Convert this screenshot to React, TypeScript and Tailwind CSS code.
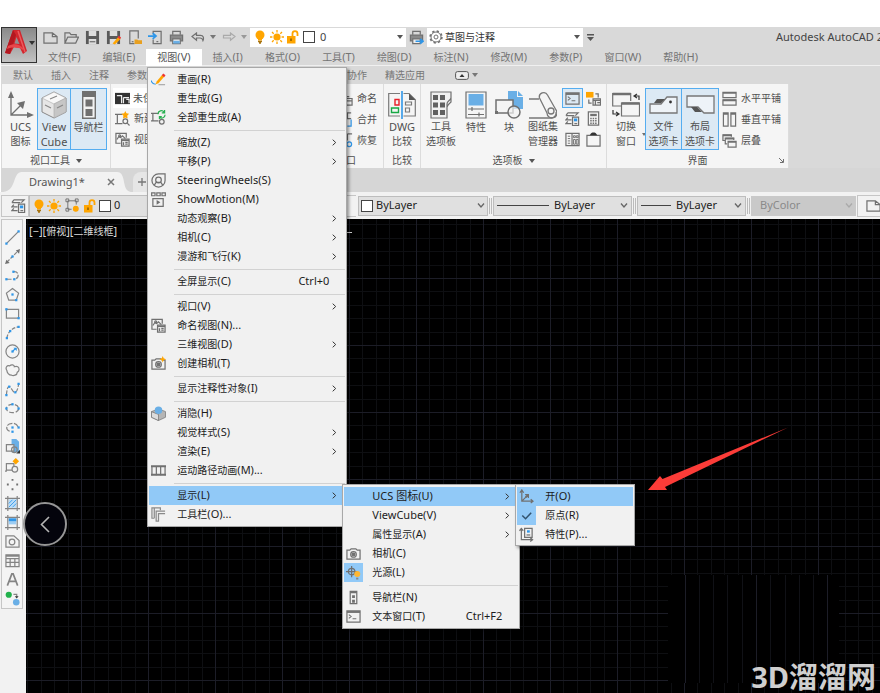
import React from 'react';

const GRAY = '#707070';
const BLUE = '#2f96e8';
const SKY = '#6aafe6';
const ORANGE = '#ffa500';

type IconProps = { w?: number; h?: number; box?: string; stroke?: string; children: React.ReactNode };

const Icon = ({ w = 15, h = 15, box = '0 0 16 16', stroke = GRAY, children }: IconProps) => (
  <svg width={w} height={h} viewBox={box} fill="none" stroke={stroke} strokeWidth="1.3" className="shrink-0" aria-hidden="true">
    {children}
  </svg>
);

const Caret = ({ color = '#555' }: { color?: string }) => (
  <svg width="6" height="4" viewBox="0 0 6 4" className="shrink-0" aria-hidden="true"><path d="M0 0h6L3 4z" fill={color} /></svg>
);

const Chevron = ({ color = '#666' }: { color?: string }) => (
  <svg width="8" height="5" viewBox="0 0 8 5" className="pointer-events-none shrink-0" aria-hidden="true"><path d="M1 .5l3 3.5L7 .5" fill="none" stroke={color} strokeWidth="1.3" /></svg>
);

// ---------- shared glyphs ----------

const Bulb = () => (
  <Icon w={12} h={14} box="0 0 12 14">
    <circle cx="6" cy="5" r="4.5" fill={ORANGE} stroke="none" />
    <path d="M4 8h4v2.5H4z" fill={ORANGE} stroke="none" />
    <path d="M4 11.5h4M5 13h2" stroke="#a87410" />
  </Icon>
);

const Sun = () => (
  <Icon w={14} h={14} box="0 0 14 14">
    <circle cx="7" cy="7" r="3.6" fill={ORANGE} stroke="none" />
    <path d="M7 0v2.4M7 11.6V14M0 7h2.4M11.6 7H14M2 2l1.7 1.7M10.3 10.3L12 12M12 2l-1.7 1.7M3.7 10.3L2 12" stroke={ORANGE} />
  </Icon>
);

const Lock = () => (
  <Icon w={13} h={14} box="0 0 13 14">
    <path d="M6.5 6V3.6a2.5 2.5 0 015 0V6" stroke={ORANGE} strokeWidth="1.8" />
    <path d="M1 6h8.5v7.5H1z" fill={ORANGE} stroke="none" />
    <path d="M5 8.5v2.5" stroke="#7a5200" />
  </Icon>
);

const Printer = ({ arrow = false }: { arrow?: boolean }) => (
  <Icon>
    <path d="M4 5V1.5h8V5" />
    <path d="M1.5 5.5h13v6h-13z" fill="#8a8a8a" />
    <path d="M4 9.5h8v5H4z" fill="#eee" />
    {arrow ? <path d="M7 12h8M12 9.5l3 2.5-3 2.5" stroke={BLUE} strokeWidth="1.8" /> : <path d="M4.5 11.5h7v3h-7z" fill={SKY} stroke="none" />}
  </Icon>
);

const UcsIcon = () => (
  <Icon>
    <path d="M3 1.5V13h12M1 4l2-3 2 3M12.500 11l2.500 2-2.500 2M3 13l7-7M6.500 6H10v3.500" />
    <path d="M7 9l3-3" strokeWidth="2" />
  </Icon>
);

const CameraIcon = ({ spark = false }: { spark?: boolean }) => (
  <Icon>
    <path d="M1 4.500h3l1.500-1.500h5L12 4.500h3V14H1z" />
    <circle cx="8" cy="9" r="3" />
    <circle cx="8" cy="9" r="1.500" fill={GRAY} />
    {spark && <path d="M12.500 0l1 2.500 2.500 1-2.500 1-1 2.500-1-2.500-2.500-1 2.500-1z" fill={ORANGE} stroke="none" />}
  </Icon>
);

const NamedViewIcon = () => (
  <Icon>
    <path d="M6 12H1V1.500h11V6" />
    <path d="M2 8l2-3 2 1 2-2 3 3" />
    <circle cx="5" cy="4" r="1" />
    <path d="M7 7.500h8V15H7z" fill="#e8e8e8" />
    <path d="M7 9h8M9 11v3M11 11h2.500M11 13h2.500" />
  </Icon>
);

const NavBarIcon = () => (
  <Icon>
    <path d="M4.500 1.500h7v13h-7z" />
    <path d="M4.500 1h7v2.500h-7zM6.500 5.500h3v3h-3zM6.500 10.500h3v3h-3z" fill={GRAY} stroke="none" />
  </Icon>
);

const TerminalIcon = () => (
  <Icon>
    <path d="M1 2h14v12H1z" />
    <path d="M1 3.200h14" strokeWidth="2" />
    <path d="M3 6l2.500 2L3 10M7 10.500h4" strokeWidth="1.100" />
  </Icon>
);

const BlockIcon = ({ w = 15, h = 15 }: { w?: number; h?: number }) => (
  <svg width={w} height={h} viewBox="0 0 28 28" fill="none" stroke={GRAY} strokeWidth="1.500" className="shrink-0" aria-hidden="true">
    <path d="M13 0h9v6h6v12H13z" fill={SKY} stroke="none" />
    <path d="M23 0l5 5h-5z" fill={SKY} stroke="none" />
    <path d="M1 9h17v13H1z" fill="#f4f4f4" />
    <circle cx="19" cy="21" r="6" fill="#f4f4f4" fillOpacity=".7" />
    <path d="M0 20h3v3H0z" fill={GRAY} stroke="none" />
  </svg>
);

// ---------- view menu ----------

type MenuItem = {
  label: string;
  mnemonic: string;
  suffix?: string;
  icon?: React.ReactNode;
  shortcut?: string;
  arrow?: boolean;
  latin?: boolean;
  active?: boolean;
  checked?: boolean;
  children?: MenuEntry[];
};
type MenuEntry = MenuItem | 'separator';

const ucsMenu: MenuEntry[] = [
  { label: '开', mnemonic: 'O', icon: <UcsIcon />, active: true },
  {
    label: '原点', mnemonic: 'R', checked: true,
    icon: <Icon><path d="M3.500 8l3.500 3.500L13 5" stroke="#33536e" strokeWidth="1.600" /></Icon>,
  },
  {
    label: '特性', mnemonic: 'P', suffix: '...',
    icon: (
      <Icon>
        <path d="M2.500 2v11.500H14M.5 4l2-2.500 2 2.500M12 11.500l2.500 2-2.500 2" />
        <path d="M6 1.500h8V11H6z" />
        <path d="M8.500 3.500h3v2.500h-3z" fill={BLUE} stroke="none" />
        <path d="M8 8.500h4" />
      </Icon>
    ),
  },
];

const displayMenu: MenuEntry[] = [
  { label: 'UCS 图标', mnemonic: 'U', arrow: true, active: true, latin: true, children: ucsMenu },
  { label: 'ViewCube', mnemonic: 'V', arrow: true, latin: true },
  { label: '属性显示', mnemonic: 'A', arrow: true },
  { label: '相机', mnemonic: 'C', icon: <CameraIcon /> },
  {
    label: '光源', mnemonic: 'L', checked: true,
    icon: (
      <Icon>
        <circle cx="6" cy="7" r="3.500" />
        <path d="M6 1v12M0 7h12" />
        <circle cx="12" cy="9.500" r="3.200" fill="#ffb733" stroke="none" />
        <path d="M10.800 13.500h2.400v2h-2.400z" fill="#888" stroke="none" />
      </Icon>
    ),
  },
  'separator',
  { label: '导航栏', mnemonic: 'N', icon: <NavBarIcon /> },
  { label: '文本窗口', mnemonic: 'T', icon: <TerminalIcon />, shortcut: 'Ctrl+F2' },
];

const viewMenu: MenuEntry[] = [
  {
    label: '重画', mnemonic: 'R',
    icon: (
      <Icon>
        <path d="M0 9c1 3 3 4 5 4" stroke={BLUE} />
        <path d="M5 13l1-3 6-7 2 2-6 7z" fill={ORANGE} stroke="none" />
        <path d="M11.500 3.500L13 1.500l2.500 2L14 5.500z" fill="#e33" stroke="none" />
        <path d="M8 13.500h7" stroke="#aaa" />
      </Icon>
    ),
  },
  { label: '重生成', mnemonic: 'G' },
  {
    label: '全部重生成', mnemonic: 'A',
    icon: (
      <Icon>
        <path d="M8 3.500H2v8h6M0 3.500h3M0 11.500h3" />
        <circle cx="11.500" cy="12.500" r="2.500" />
        <path d="M7.500 4.500A3.500 3.500 0 0114 2.500M14.500 0v3h-3M15 5a3.500 3.500 0 01-6 2.500M9 9.500V7h2.500" stroke="#27b050" />
      </Icon>
    ),
  },
  'separator',
  { label: '缩放', mnemonic: 'Z', arrow: true },
  { label: '平移', mnemonic: 'P', arrow: true },
  {
    label: 'SteeringWheels', mnemonic: 'S', latin: true,
    icon: (
      <Icon>
        <path d="M8 1h7v7a7 7 0 11-7-7z" />
        <circle cx="8" cy="7.500" r="3" />
        <path d="M3.500 13l2-3h5l2 3" />
      </Icon>
    ),
  },
  {
    label: 'ShowMotion', mnemonic: 'M', latin: true,
    icon: (
      <Icon>
        <path d="M.7 1h3.600v3H.7zM6.200 1h3.600v3H6.200zM11.700 1h3.600v3h-3.600zM2 7h11v8.300H2z" />
        <path d="M6 8.500v5l4-2.500z" fill={GRAY} stroke="none" />
      </Icon>
    ),
  },
  { label: '动态观察', mnemonic: 'B', arrow: true },
  { label: '相机', mnemonic: 'C', arrow: true },
  { label: '漫游和飞行', mnemonic: 'K', arrow: true },
  'separator',
  { label: '全屏显示', mnemonic: 'C', shortcut: 'Ctrl+0' },
  'separator',
  { label: '视口', mnemonic: 'V', arrow: true },
  { label: '命名视图', mnemonic: 'N', suffix: '...', icon: <NamedViewIcon /> },
  { label: '三维视图', mnemonic: 'D', arrow: true },
  { label: '创建相机', mnemonic: 'T', icon: <CameraIcon spark /> },
  'separator',
  { label: '显示注释性对象', mnemonic: 'I', arrow: true },
  'separator',
  {
    label: '消隐', mnemonic: 'H',
    icon: (
      <Icon>
        <path d="M0.500 6L8 3l7.500 3v6L8 15.500.5 12z" fill="#b5b5b5" stroke="#777" strokeWidth=".8" />
        <path d="M.5 6L8 9v6.500L.5 12z" fill="#dcdcdc" stroke="#777" strokeWidth=".8" />
        <circle cx="8" cy="4.500" r="4" fill={SKY} stroke="none" />
      </Icon>
    ),
  },
  { label: '视觉样式', mnemonic: 'S', arrow: true },
  { label: '渲染', mnemonic: 'E', arrow: true },
  {
    label: '运动路径动画', mnemonic: 'M', suffix: '...',
    icon: (
      <Icon>
        <path d="M0 3.500h16M0 12.500h16" strokeWidth="2" />
        <path d="M1 4v9M5.700 4v9M10.300 4v9M15 4v9" />
      </Icon>
    ),
  },
  'separator',
  { label: '显示', mnemonic: 'L', arrow: true, active: true, children: displayMenu },
  {
    label: '工具栏', mnemonic: 'O', suffix: '...',
    icon: (
      <Icon stroke="#8a8a8a">
        <path d="M10 3.500V1H1v11h2.500M3.500 1v11" />
        <path d="M15 4.500H5.500V15H8V7h7" />
      </Icon>
    ),
  },
];

const Menu = ({ items, className }: { items: MenuEntry[]; className: string }) => (
  <ul role="menu" className={`absolute border border-[#a8a8a8] bg-[#f1f1f1] px-px text-[#1c1c1c] shadow-[2px_2px_3px_rgba(0,0,0,0.4)] ${className}`}>
    {items.map((item, i) =>
      item === 'separator' ? (
        <li key={i} role="separator" className="flex h-[6px] items-center pl-[25px]"><span className="h-px w-full bg-[#d2d2d2]" /></li>
      ) : (
        <li key={i} role="none" className="relative">
          <button role="menuitem" className={`flex h-[19px] w-full items-center whitespace-nowrap text-[10px] ${item.active ? 'bg-[#91c9f7]' : ''}`}>
            <span className={`mr-[9px] flex h-full w-[19px] shrink-0 items-center justify-center ${item.checked ? 'bg-[#91c9f7]' : ''}`}>{item.icon}</span>
            <span className={item.latin ? 'text-[11px]' : ''}>
              {item.label}<span className="text-[11px]">({item.mnemonic}){item.suffix}</span>
            </span>
            <span className="flex-1" />
            {item.shortcut && <span className="mr-[16px] text-[11px]">{item.shortcut}</span>}
            {item.arrow && (
              <svg width="5" height="7" viewBox="0 0 5 7" className="mr-[8px]" aria-hidden="true"><path d="M.7.7l3 2.800-3 2.800" fill="none" stroke="#333" /></svg>
            )}
          </button>
          {item.children && (
            <Menu items={item.children} className={item.children === displayMenu ? 'left-[193px] -top-[2px] w-[178px] pt-[2px] pb-[2px]' : 'left-[171px] -top-[3px] w-[120px] pt-[2px] pb-px'} />
          )}
        </li>
      )
    )}
  </ul>
);

// ---------- title bar ----------

const quickAccess = [
  { name: '新建', icon: <Icon><path d="M1 3h9l5 4v7H1zM10 3v4h5" /></Icon> },
  { name: '打开', icon: <Icon><path d="M1 14V3h5l1.500 2H13v2.500M1 14L4 7.500h11.500L12.500 14z" /></Icon> },
  {
    name: '保存',
    icon: <Icon><path d="M1 1h14v14H1z" fill="#5a5a5a" stroke="none" /><path d="M4 1h8v5.500H4zM4 9.500h8V15H4z" fill="#ddd" stroke="none" /><path d="M5 12.500h6" /></Icon>,
  },
  {
    name: '另存为',
    icon: <Icon><path d="M1 1h14v14H1z" fill="#5a5a5a" stroke="none" /><path d="M4 1h8v5.500H4zM4 9.500h8V15H4z" fill="#ddd" stroke="none" /><path d="M7 14.500l6-7 2.500 2-6 6z" fill={ORANGE} stroke="none" /><path d="M13 7l2.500 2" stroke="#e33" strokeWidth="2" /></Icon>,
  },
  {
    name: '从移动设备打开',
    icon: <Icon><path d="M8 14.500H3V1h9v8" /><path d="M5 12.500h2" /><path d="M8 15V10h3l1 1h4v4z" fill="#e8a020" stroke="none" /></Icon>,
  },
  {
    name: '保存到移动设备',
    icon: <Icon><path d="M5.500 4V1.500H14v13H5.500V10M9 12.500h2" /><path d="M0 6.500h7M5 3.500l3.500 3L5 9.500" stroke={BLUE} strokeWidth="1.900" /></Icon>,
  },
  { name: '打印', icon: <Printer /> },
];

const Arrow = ({ flip = false }: { flip?: boolean }) => (
  <svg width="14" height="10" viewBox="0 0 14 10" fill="none" stroke={flip ? '#aaa' : '#707070'} strokeWidth="1.200" aria-hidden="true">
    {flip ? <path d="M13 4.500L8.500 1v2.300H1.500v2.700h7v2.300z" /> : <path d="M1 4.500L5.500 1v2.300h4c3 0 3.500 3 2.500 5.200-.5-2-1.500-2.500-3-2.500H5.500v2.300z" />}
  </svg>
);

const TitleBar = () => (
  <div className="flex h-[20px] items-center">
    <div className="ml-[6px] flex items-center gap-[6px]">
      {quickAccess.map((q) => <button key={q.name} aria-label={q.name}>{q.icon}</button>)}
    </div>
    <button aria-label="放弃" className="ml-[7px]"><Arrow /></button>
    <button aria-label="放弃列表" className="ml-[5px]"><Caret color="#777" /></button>
    <button aria-label="重做" className="ml-[6px]"><Arrow flip /></button>
    <button aria-label="重做列表" className="ml-[5px]"><Caret color="#999" /></button>
    <div className="ml-[3px] flex h-[19px] w-[156px] shrink-0 items-center bg-white pr-[3px] pl-[4px] text-[11px] text-[#444]">
      <Bulb />
      <span className="ml-[4px]"><Sun /></span>
      <span className="ml-[2px]"><Lock /></span>
      <span className="mr-[5px] ml-[4px] size-[12px] shrink-0 border border-[#444]" />
      <select aria-label="图层" className="min-w-0 flex-1 appearance-none bg-transparent"><option>0</option></select>
      <Caret />
    </div>
    <button aria-label="批处理打印" className="ml-[3px]"><Printer arrow /></button>
    <div className="ml-[3px] flex h-[19px] w-[156px] shrink-0 items-center bg-white pr-[3px] pl-[2px] text-[10px] text-[#333]">
      <svg width="14" height="14" viewBox="0 0 14 14" fill="none" stroke={GRAY} className="mr-[2px] shrink-0" aria-hidden="true">
        <circle cx="7" cy="7" r="5" />
        <circle cx="7" cy="7" r="2" />
        <circle cx="7" cy="7" r="5.900" strokeWidth="1.600" strokeDasharray="2.300 2.330" />
      </svg>
      <select aria-label="工作空间" className="min-w-0 flex-1 appearance-none bg-transparent"><option>草图与注释</option></select>
      <Caret />
    </div>
    <button aria-label="自定义快速访问工具栏" className="ml-[4px] shrink-0">
      <svg width="7" height="7" viewBox="0 0 7 7" aria-hidden="true"><path d="M0 0h7v1.500H0zM0 3h7L3.500 7z" fill="#555" /></svg>
    </button>
    <span className="ml-[182px] text-[11px] whitespace-nowrap text-[#444]">Autodesk AutoCAD 2020</span>
  </div>
);

const menuBar = [
  ['文件', 'F'], ['编辑', 'E'], ['视图', 'V'], ['插入', 'I'], ['格式', 'O'], ['工具', 'T'],
  ['绘图', 'D'], ['标注', 'N'], ['修改', 'M'], ['参数', 'P'], ['窗口', 'W'], ['帮助', 'H'],
];

const Header = () => (
  <header className="relative z-20 ml-px flex h-[39px] border-b border-[#f0f0f0] bg-[#d9d9d9]">
    <button aria-label="应用程序菜单" className="flex h-[36px] w-[36px] shrink-0 items-start justify-center gap-px border border-[#333] bg-linear-to-b from-[#8a8a8a] to-[#c2c2c2] pt-px">
      <svg width="24" height="26" viewBox="0 0 24 26" aria-hidden="true">
        <path d="M9 1h7l7 21-4 3-3-6-6-1-4 7-5-1z" fill="#d2262d" />
        <path d="M9 1l3 5-6 19-5-1z" fill="#b31820" />
        <path d="M12.500 8l3 7-5-.5z" fill="#909090" />
        <path d="M4 17c6-3 11-2 15 2v2c-5-3-10-3-16-1z" fill="#e8474b" />
        <path d="M14 2l7 21" stroke="#ea5a5e" strokeWidth="1.500" />
      </svg>
      <span className="mt-[12px]"><Caret color="#333" /></span>
    </button>
    <div className="min-w-0 flex-1">
      <TitleBar />
      <nav className="mt-[2px] flex h-[17px] text-[10px] text-[#747474]">
        {menuBar.map(([label, key]) => (
          <div key={key} className="relative">
            <button className={`flex h-full items-center px-[11px] whitespace-nowrap ${key === 'V' ? 'bg-white text-[#555]' : ''}`}>
              {label}<span className="text-[11px]">({key})</span>
            </button>
            {key === 'V' && <Menu items={viewMenu} className="top-[18px] left-px w-[200px] pt-[2px] pb-[2px]" />}
          </div>
        ))}
      </nav>
    </div>
  </header>
);

// ---------- ribbon ----------

const tabs = ['默认', '插入', '注释', '参数化', '视图', '管理', '输出', '附加模块', '协作', '精选应用'];

const RibbonTabs = () => (
  <div className="flex h-[18px] items-center pl-[3px] text-[10px] text-[#777]">
    {tabs.map((t) => <button key={t} className="px-[9px] whitespace-nowrap">{t}</button>)}
    <button aria-label="最小化功能区" className="ml-[21px] flex items-center gap-[3px]">
      <svg width="14" height="9" viewBox="0 0 14 9" aria-hidden="true"><rect x=".6" y=".6" width="12.800" height="7.800" rx="2" fill="#eee" stroke="#555" /><path d="M4.500 6L7 3l2.500 3z" fill="#333" /></svg>
      <Caret color="#777" />
    </button>
  </div>
);

const BigButton = ({ icon, lines, on = false, className = '' }: { icon: React.ReactNode; lines: string[]; on?: boolean; className?: string }) => (
  <button className={`flex h-[62px] shrink-0 flex-col items-center border pt-px ${on ? 'border-[#55adf0] bg-[#dce9f4]' : 'border-transparent'} ${className}`}>
    <span className="flex h-[30px] items-center">{icon}</span>
    {lines.map((l) => (
      <span key={l} className={`leading-[15px] whitespace-nowrap ${/^[A-Z]/.test(l) ? 'text-[11px]' : 'text-[10px]'}`}>{l}</span>
    ))}
  </button>
);

const Panel = ({ title, caret = false, launcher = false, className = '', children }: { title?: string; caret?: boolean; launcher?: boolean; className?: string; children: React.ReactNode }) => (
  <section className={`flex shrink-0 flex-col border-r border-[#dcdcdc] text-[10px] text-[#505050] ${className}`}>
    <div className="flex h-[69px] pt-[4px]">{children}</div>
    <div className="relative flex h-[15px] items-center justify-center gap-[6px]">
      {title}{caret && <Caret />}
      {launcher && (
        <button aria-label={`${title}设置`} className="absolute right-[4px]">
          <svg width="5" height="5" viewBox="0 0 5 5" aria-hidden="true"><path d="M0 0l4 4M4.500 1v3.500H1" stroke={GRAY} fill="none" /></svg>
        </button>
      )}
    </div>
  </section>
);

const SmallButton = ({ icon, label }: { icon: React.ReactNode; label: string }) => (
  <button className="flex h-[21px] items-center gap-[4px] whitespace-nowrap">{icon}{label}</button>
);

const tilings = [
  { label: '水平平铺', icon: <Icon><path d="M1 1.500h14V7H1zM1 9.500h14V15H1z" /><path d="M1 2h14M1 10h14" strokeWidth="2" /></Icon> },
  { label: '垂直平铺', icon: <Icon><path d="M1.500 1h5v14h-5zM9.500 1h5v14h-5z" /><path d="M1.500 2h5M9.500 2h5" strokeWidth="2" /></Icon> },
  { label: '层叠', icon: <Icon><path d="M3 8H1V2h9v2M5.500 11.500h-2v-6h9v2" /><path d="M6.500 9H15v6H6.500z" /><path d="M1 2.500h9M4 6h9M6.500 9.500H15" strokeWidth="1.800" /></Icon> },
];

const CubeIcon = () => (
  <svg width="26" height="28" viewBox="0 0 26 28" aria-hidden="true">
    <path d="M13 1l12 6v14l-12 6L1 21V7z" fill="#e6e6e6" stroke="#888" />
    <path d="M13 1l12 6-12 6L1 7z" fill="#f8f8f8" stroke="#aaa" strokeWidth=".6" />
    <path d="M13 13l12-6v14l-12 6z" fill="#c6c6c6" stroke="#aaa" strokeWidth=".6" />
    <path d="M9 8l7-3M4 14l6 3M16 17l6-3" stroke="#888" strokeWidth="1.200" />
  </svg>
);

const SheetIcon = () => (
  <Icon>
    <path d="M3 2h11l-3 3M1 5h9M3 2L1 5M3 7L1 9.500h6M3 11l-2 2.500h6" />
    <path d="M8 6.500h6.500v9H8z" fill="#eee" />
    <path d="M9.500 8h3.500v3H9.500z" fill={BLUE} stroke="none" />
    <path d="M10 13.500h3" />
  </Icon>
);

const paletteTools = [
  { name: '命令行', icon: <TerminalIcon />, on: true },
  {
    name: '设计中心',
    icon: <Icon><path d="M0 1h8v6H0z" fill={ORANGE} stroke="none" /><path d="M10 3h3v4M3 9v4h3" /><path d="M7.500 8.500h8v6.500h-8z" fill="#eee" /><path d="M7.500 10h8M10 10v5M12 12.500h3" /></Icon>,
  },
  { name: '图纸集', icon: <SheetIcon /> },
  {
    name: '计算器',
    icon: <Icon><path d="M2.500 1h11v14h-11z" /><path d="M4.500 3h7v2.500h-7z" fill={GRAY} stroke="none" /><path d="M4.500 8h7M4.500 10.500h7M4.500 13h7" strokeWidth="1.600" strokeDasharray="1.600 1" /></Icon>,
  },
  {
    name: '标记集',
    icon: <Icon><path d="M1 1.500h14v13H1zM7.500 1.500v13" /><path d="M3 4.500h2.500M3 7h2.500M3 9.500h2.500M3 12h2.500M9 4h2v2H9zM12 4h2v2h-2zM9 8h2v5H9zM12 8h2v5h-2z" strokeWidth="1" /></Icon>,
  },
  {
    name: '快速计算',
    icon: <Icon><path d="M1 3.500h14V15H1z" /><path d="M4 3.500C5 1 6.500.5 8 .5s3 .5 4 3z" fill="#333" stroke="none" /></Icon>,
  },
];

const Ribbon = () => (
  <div className="ml-px flex h-[84px] w-max bg-[#f5f5f5]">
    <Panel title="视口工具" caret className="w-[109px]">
      <BigButton
        className="ml-[2px] w-[33px]"
        lines={['UCS', '图标']}
        icon={
          <svg width="27" height="27" viewBox="0 0 27 27" fill="none" stroke={GRAY} strokeWidth="1.300" aria-hidden="true">
            <path d="M4 4v20h19M4 24L16 12" />
            <path d="M1 7l3-7 3 7zM20 21l7 3-7 3zM10 12l8-2-2 8z" fill={GRAY} stroke="none" />
          </svg>
        }
      />
      <BigButton on className="w-[34px]" lines={['View', 'Cube']} icon={<CubeIcon />} />
      <BigButton
        on
        className="-ml-px w-[37px]"
        lines={['导航栏']}
        icon={
          <svg width="14" height="28" viewBox="0 0 14 28" fill="none" stroke={GRAY} aria-hidden="true">
            <path d="M.7.7h12.600v26.600H.7z" strokeWidth="1.400" fill="#f2f2f2" />
            <path d="M0 0h14v6H0z" fill={GRAY} stroke="none" />
            <path d="M3.500 8.500h7v7h-7zM3.500 18h7v7h-7z" fill={GRAY} stroke="none" />
          </svg>
        }
      />
    </Panel>
    <Panel className="w-[178px]">
      <div className="ml-[2px]">
        <div className="flex h-[20px] w-[160px] items-center gap-[3px] bg-white pl-[2px]">
          <Icon><path d="M0 2h16v12H0z" fill="#333" stroke="none" /><path d="M2 5h5v8M9 7h6M9 7v6M12 9h3v4" stroke="#eee" /></Icon>
          <select aria-label="当前视图" className="min-w-0 flex-1 appearance-none bg-transparent"><option>未保存的视图</option></select>
        </div>
        <div className="pl-[2px]">
          <SmallButton label="新建视图" icon={<Icon><path d="M8 3.500H2.500v10H8M0 3.500h4M0 13.500h4" /><path d="M11 0l1.200 2.300 2.800.7-2 2 .5 3-2.500-1.200L8.500 8 9 5 7 3l2.800-.7z" fill={ORANGE} stroke="none" /><circle cx="11" cy="11" r="2.500" /><path d="M13 13l2.500 2.500" /></Icon>} />
          <SmallButton label="视图管理器" icon={<NamedViewIcon />} />
        </div>
      </div>
    </Panel>
    <Panel title="模型视口" className="w-[95px]">
      <div className="ml-auto pr-[6px]">
        <SmallButton label="命名" icon={<Icon><path d="M4 1v5h8M9 8h6v7H9zM9 10.500h6" /></Icon>} />
        <SmallButton label="合并" icon={<Icon><path d="M14 1h-4v6h4" /><path d="M10 15h4V8" stroke={BLUE} /></Icon>} />
        <SmallButton label="恢复" icon={<Icon><path d="M10 1h5M10 1v7" /><circle cx="12" cy="12" r="2.500" stroke={BLUE} /></Icon>} />
      </div>
    </Panel>
    <Panel title="比较" className="w-[37px]">
      <BigButton
        className="w-[36px]"
        lines={['DWG', '比较']}
        icon={
          <svg width="28" height="28" viewBox="0 0 28 28" fill="none" stroke="#7a7a7a" strokeWidth="1.200" aria-hidden="true">
            <path d="M12 2.500H.7V25H12M15.500 2.500H21l6.300 6.300V25H15.500" />
            <path d="M21 2.500V9h6.500z" fill="#555" stroke="none" />
            <path d="M14 0v28" stroke={BLUE} strokeWidth="1.600" />
            <path d="M7 8.500h4v5.500H7z" stroke="#e8202a" strokeWidth="1.400" />
            <path d="M3.500 17h7v4.500h-7z" stroke="#18a845" strokeWidth="1.400" />
            <path d="M17.500 11h6v3h-6zM17.500 17h4v4h-4z" />
          </svg>
        }
      />
    </Panel>
    <Panel title="选项板" caret className="w-[186px]">
      <BigButton
        className="ml-[2px] w-[36px]"
        lines={['工具', '选项板']}
        icon={
          <svg width="22" height="28" viewBox="0 0 22 28" fill="none" stroke={GRAY} strokeWidth="1.200" aria-hidden="true">
            <path d="M17 17v10H1V1h20v6" fill="#f0f0f0" />
            <path d="M3 4h5v5H3zM10 4h5v5h-5zM3 11.500h5v5H3zM10 11.500h5v5h-5zM3 19h5v5H3zM10 19h5v5h-5z" fill="#606060" stroke="none" />
            <path d="M21 7c-1 3-4 3-4 6v4M21 7v4c-1 1-3 2-4 5" />
          </svg>
        }
      />
      <BigButton
        className="w-[34px]"
        lines={['特性']}
        icon={
          <svg width="22" height="28" viewBox="0 0 22 28" fill="none" stroke={GRAY} strokeWidth="1.200" aria-hidden="true">
            <path d="M1 1h20v26H1z" />
            <path d="M3.500 3h15v11.500h-15z" fill={SKY} stroke="none" />
            <path d="M3 18h16M3 23.500h16M7 16v4M14 21.500v4" />
          </svg>
        }
      />
      <BigButton className="w-[32px]" lines={['块']} icon={<BlockIcon w={28} h={28} />} />
      <BigButton
        className="w-[36px]"
        lines={['图纸集', '管理器']}
        icon={
          <svg width="28" height="28" viewBox="0 0 28 28" fill="none" stroke="#777" strokeWidth="1.300" aria-hidden="true">
            <path d="M0 8h10M0 27h22M10.500 7L18 22M18.500 4L27 19" />
            <path d="M10.500 7a4.300 4.300 0 018-3M18 22a5 5 0 109-3" />
            <path d="M22 27a5 5 0 005-6" />
            <circle cx="22" cy="20" r="3" />
          </svg>
        }
      />
      <div className="ml-px grid h-[62px] grid-cols-[21px_21px]">
        {paletteTools.map((t) => (
          <button key={t.name} aria-label={t.name} className={`flex h-[20px] items-center justify-center border ${t.on ? 'border-[#55adf0] bg-[#dce9f4]' : 'border-transparent'}`}>{t.icon}</button>
        ))}
      </div>
    </Panel>
    <Panel title="界面" launcher className="w-[182px]">
      <div className="flex items-start">
        <BigButton
          className="ml-[3px] w-[32px]"
          lines={['切换', '窗口']}
          icon={
            <svg width="28" height="26" viewBox="0 0 28 26" fill="none" stroke={GRAY} strokeWidth="1.200" aria-hidden="true">
              <path d="M9 14H.7V1.500h18V9" />
              <path d="M9.500 11h18v13h-18z" fill="#f5f5f5" />
              <path d="M.7 2h18M9.500 11.500h18" strokeWidth="2.400" />
              <path d="M22 4h5v4M25 2l-3 2 3 2M1 18v4h5M4 20l3 2-3 2" stroke="#333" />
            </svg>
          }
        />
        <svg width="4" height="3" viewBox="0 0 4 3" className="mt-[45px]" aria-hidden="true"><path d="M0 0h4L2 3z" fill={GRAY} /></svg>
      </div>
      <BigButton
        on
        className="-ml-px w-[37px]"
        lines={['文件', '选项卡']}
        icon={
          <svg width="29" height="20" viewBox="0 0 29 20" fill="none" stroke="#777" strokeWidth="1.300" aria-hidden="true">
            <path d="M1 9h11l6-7h10v16H1z" fill="#eef3f8" />
            <path d="M5 8l3-4h8l-4 4z" fill="#555" stroke="none" />
            <circle cx="21.500" cy="7" r="1.400" fill="#333" stroke="none" />
          </svg>
        }
      />
      <BigButton
        on
        className="-ml-px w-[38px]"
        lines={['布局', '选项卡']}
        icon={
          <svg width="29" height="20" viewBox="0 0 29 20" fill="none" stroke="#777" strokeWidth="1.300" aria-hidden="true">
            <path d="M1 1h27v17H18l-6-6H1z" fill="#eef3f8" />
            <path d="M5 12h6l5 5h-7z" fill="#555" stroke="none" />
          </svg>
        }
      />
      <div className="ml-[3px] flex flex-col">
        {tilings.map((t) => <SmallButton key={t.label} {...t} />)}
      </div>
    </Panel>
  </div>
);

// ---------- file tabs + property bars ----------

const FileTabs = () => (
  <div className="ml-px flex h-[24px] items-end bg-[#d6d6d6]">
    <svg width="21" height="20" viewBox="0 0 21 20" aria-hidden="true"><path d="M2 20C16 19 11 0 21 0v20z" fill="#f2f2f2" /></svg>
    <div className="-ml-px flex h-[20px] w-[96px] items-center justify-between bg-[#f2f2f2] pr-[2px] pl-[8px] text-[11px] text-[#555]">
      <button>Drawing1*</button>
      <button aria-label="关闭">
        <svg width="8" height="8" viewBox="0 0 8 8" aria-hidden="true"><path d="M1 1l6 6M7 1L1 7" stroke="#777" strokeWidth="1.500" /></svg>
      </button>
    </div>
    <svg width="16" height="20" viewBox="0 0 16 20" aria-hidden="true"><path d="M14 20C4 19 10 0 0 0v20z" fill="#f2f2f2" /></svg>
    <button aria-label="新图形" className="flex h-[20px] w-[22px] items-center rounded-t-lg bg-[#e6e6e6] pl-[5px]">
      <svg width="8" height="8" viewBox="0 0 8 8" aria-hidden="true"><path d="M4 0v8M0 4h8" stroke="#777" strokeWidth="1.300" /></svg>
    </button>
  </div>
);

const Divider = () => <span className="mx-px h-[16px] w-[3px] shrink-0 border-x border-[#bbb]" />;

const PropertyBar = () => (
  <div className="flex h-[27px] items-center bg-[#f2f2f2] pl-px text-[11px] text-[#222]">
    <button aria-label="图层特性" className="flex h-[22px] w-[28px] shrink-0 items-center justify-center border border-[#c6c6c6] pl-[7px]"><SheetIcon /></button>
    <div className="flex h-[22px] w-[310px] shrink-0 items-center border border-[#bdbdbd] bg-[#e0e0e0] pl-[3px]">
      <Bulb />
      <span className="ml-[2px]"><Sun /></span>
      <span className="ml-[4px]">
        <Icon><path d="M3 3h9M3 3v9M12 3v4M3 12h4M1 1h3v3H1zM11 1h3v3h-3zM1 11h3v3H1z" strokeWidth="1" /><circle cx="11.500" cy="11.500" r="2.500" fill={ORANGE} stroke={ORANGE} /></Icon>
      </span>
      <span className="ml-[3px]"><Lock /></span>
      <span className="mx-[3px] size-[12px] shrink-0 border border-[#444] bg-white" />
      <select aria-label="当前图层" className="min-w-0 flex-1 appearance-none bg-transparent"><option>0</option></select>
    </div>
    <span className="ml-[3px] h-[22px] w-[14px] shrink-0 border-y border-[#c6c6c6]" />
    <div className="ml-[2px] flex h-[20px] w-[130px] shrink-0 items-center border border-[#bdbdbd] bg-[#e0e0e0] px-[2px]">
      <span className="mr-[3px] size-[12px] border border-[#444] bg-white" />
      <select aria-label="颜色" className="min-w-0 flex-1 appearance-none bg-transparent"><option>ByLayer</option></select>
      <Chevron />
    </div>
    <Divider />
    <div className="flex h-[20px] w-[139px] shrink-0 items-center border border-[#bdbdbd] bg-[#e0e0e0] px-[3px]">
      <span className="mr-[5px] h-px w-[52px] shrink-0 bg-[#444]" />
      <select aria-label="线型" className="min-w-0 flex-1 appearance-none bg-transparent"><option>ByLayer</option></select>
      <Chevron />
    </div>
    <Divider />
    <div className="flex h-[20px] w-[109px] shrink-0 items-center border border-[#bdbdbd] bg-[#e0e0e0] px-[3px]">
      <span className="mr-[5px] h-px w-[30px] shrink-0 bg-[#444]" />
      <select aria-label="线宽" className="min-w-0 flex-1 appearance-none bg-transparent"><option>ByLayer</option></select>
      <Chevron />
    </div>
    <Divider />
    <div className="flex h-[20px] w-[105px] shrink-0 items-center bg-[#c9c9c9] pr-[3px] pl-[9px] text-[#8a8a8a]">
      <select aria-label="打印样式" disabled className="min-w-0 flex-1 appearance-none bg-transparent"><option>ByColor</option></select>
      <Chevron color="#aaa" />
    </div>
    <button aria-label="新建" className="ml-px flex h-[22px] flex-1 items-center border border-[#c6c6c6] pl-[8px]"><Icon><path d="M1 3h9l5 4v7H1zM10 3v4h5" /></Icon></button>
  </div>
);

// ---------- draw toolbar ----------

const Dot = ({ x, y }: { x: number; y: number }) => <rect x={x - 1.2} y={y - 1.2} width="2.400" height="2.400" fill={BLUE} stroke="none" />;

const drawTools = [
  { name: '直线', icon: <><path d="M2 14L14 2" /><Dot x={1.5} y={14.5} /><Dot x={14.5} y={1.5} /></> },
  { name: '构造线', icon: <><path d="M2 14L14 2" strokeDasharray="4 1.500" /><path d="M0 16l1.500-4.500L5 15zM16 0l-4.500 1.500L15 5z" fill={GRAY} stroke="none" /><Dot x={8} y={8} /></> },
  { name: '多段线', icon: <><path d="M2 12h8M9 4c6-1 7 7 1 8" strokeDasharray="5 1.500" /><Dot x={1.5} y={12} /><Dot x={9} y={4} /><Dot x={10} y={12} /></> },
  { name: '多边形', icon: <><path d="M8 1.500l6.500 5L12 14H4L1.500 6.500z" /><Dot x={8} y={8} /><Dot x={12} y={14} /></> },
  { name: '矩形', icon: <><path d="M1.500 3.500h13v9.500h-13z" /><Dot x={1.5} y={3.5} /><Dot x={14.5} y={13} /></> },
  { name: '圆弧', icon: <><path d="M2 14C3 7 8 3 14 2" strokeDasharray="4 1.500" /><Dot x={2} y={14} /><Dot x={5.5} y={6.5} /><Dot x={14.5} y={2} /></> },
  { name: '圆', icon: <><circle cx="8" cy="8" r="7" /><path d="M8 8l3-3" stroke={BLUE} /><Dot x={8} y={8} /><path d="M9 4h3.500v3.500z" fill={BLUE} stroke="none" /></> },
  { name: '修订云线', icon: <path d="M2 8C0 5 2 2 5 3c2-2 5-1 5 1 3-1 5 0 5 3 0 2-2 3-2 3 0 3-4 4-6 3-3 0-5-3-5-5z" /> },
  { name: '样条曲线', icon: <><path d="M1.500 14C2 8 3 4 5 5s3 6 5.500 6S14 6 14.500 2" strokeDasharray="5 1.500" /><Dot x={1.5} y={14} /><Dot x={4.5} y={5} /><Dot x={11} y={11} /><Dot x={14.5} y={2} /></> },
  { name: '椭圆', icon: <><ellipse cx="8" cy="8" rx="6.500" ry="4.500" strokeDasharray="5 2" /><Dot x={1.5} y={8} /><Dot x={14.5} y={8} /><Dot x={8} y={3.5} /></> },
  { name: '椭圆弧', icon: <><path d="M5 12C0 10 1 3.500 8 3.500c3 0 5 1.500 6 4" strokeDasharray="6 1.500" /><Dot x={8} y={8} /><Dot x={14.5} y={8} /><Dot x={8} y={12.5} /></> },
  { name: '插入块', icon: <><path d="M7 0h5l3 3v11H7z" fill={SKY} stroke="none" /><path d="M1.500 6h8v7h-8z" fill="#f2f2f2" /><circle cx="10" cy="11.500" r="3" /><path d="M12 15.500h4v-4z" fill="#333" stroke="none" /></> },
  { name: '创建块', icon: <><path d="M1.500 6h8v7h-8zM0 14h2" /><circle cx="10.500" cy="12" r="3" fill="#f2f2f2" /><path d="M11.500 0l3.500 3.500L11.500 7 8 3.500z" fill={ORANGE} stroke="none" /></> },
  { name: '点', icon: <path d="M7 2h2v2H7zM2 7h2v2H2zM12 7h2v2h-2zM7 12h2v2H7z" fill={GRAY} stroke="none" /> },
  { name: '图案填充', icon: <><path d="M3 0v16M13 0v16M0 2.500h16M0 13.500h16" /><path d="M4 3.500h8v9H4z" fill="#b9dcf7" stroke="none" /><path d="M4 8l4-4M4 12l8-8M8 12l4-4" stroke={BLUE} strokeWidth=".9" /></> },
  { name: '渐变色', icon: <><path d="M3 0v16M13 0v16M0 2.500h16M0 13.500h16" /><path d="M4 3.500h8V7H4z" fill={BLUE} stroke="none" /><path d="M4 7h8v3H4z" fill="#9ccdf4" stroke="none" /></> },
  { name: '面域', icon: <><path d="M1 2h8.500L15 7v7H1z" /><circle cx="7.500" cy="8.500" r="3" /></> },
  { name: '表格', icon: <><path d="M1 2h14v12.500H1zM1 6h14M1 10h14M5.500 6v8.500M10.500 6v8.500" /><path d="M1 3h14" strokeWidth="2" /></> },
  { name: '多行文字', icon: <path d="M2.500 14.500L7.300 2h1.400l4.800 12.500M4.300 10h7.400" strokeWidth="1.800" /> },
  { name: '添加选定对象', icon: <><circle cx="4" cy="4" r="3.300" fill="#22b14c" stroke="none" /><circle cx="12" cy="12" r="3.500" fill={SKY} stroke="none" /><path d="M9 3.500h3.500V6" /><path d="M10.500 5.500h4L12.500 8z" fill="#333" stroke="none" /></> },
];

const DrawToolbar = () => (
  <aside className="w-[26px] shrink-0 bg-[#f2f2f2] pl-px">
    <div className="flex w-[22px] flex-col items-center border border-[#c6c6c6] bg-[#f4f4f4] pt-[8px]">
      {drawTools.map((t) => (
        <button key={t.name} aria-label={t.name} className="flex h-[19px] items-center"><Icon stroke="#848484">{t.icon}</Icon></button>
      ))}
    </div>
  </aside>
);

// ---------- model space ----------

const minor = [13, 27, 40, 54];
const patchLines = [18, 32, 46, 60, 75, 89, 103, 118, 132, 146, 160];

const Canvas = () => (
  <main className="relative flex-1 bg-black">
    <svg className="absolute inset-0 size-full" aria-hidden="true">
      <defs>
        <pattern id="grid" width="67" height="67" x="55" y="59" patternUnits="userSpaceOnUse">
          {minor.map((p) => <path key={p} d={`M${p}.5 0v67M0 ${p}.5h67`} stroke="#0e0f12" />)}
          <path d="M.5 0v67M0 .5h67" stroke="#1c1d27" />
        </pattern>
      </defs>
      <rect width="100%" height="100%" fill="url(#grid)" />
    </svg>
    <svg width="171" height="108" className="absolute right-[41px] bottom-[10px] bg-black" aria-hidden="true">
      {patchLines.map((x) => <path key={x} d={`M${x - .5} 0v108`} stroke={x === 18 || x === 89 || x === 160 ? '#1c1d27' : '#101116'} />)}
    </svg>
    <div className="absolute top-[4px] left-[3px] text-[11px] leading-[15px] whitespace-nowrap text-[#dcdcdc]">
      [−][<span className="text-[10px]">俯视</span>][<span className="text-[10px]">二维线框</span>]
    </div>
    <span className="absolute top-[13px] left-[321px] h-px w-[5px] bg-[#ccc]" />
    <button aria-label="上一张" className="absolute top-[283px] -left-[3px] flex size-[44px] items-center justify-center rounded-full border-2 border-[#969696] bg-[#04040c]">
      <svg width="10" height="17" viewBox="0 0 10 17" aria-hidden="true"><path d="M9 1L1.500 8.500 9 16" fill="none" stroke="#b5b5b5" strokeWidth="1.600" /></svg>
    </button>
    <svg width="140" height="64" viewBox="0 0 140 64" className="absolute top-[208px] left-[622px]" aria-hidden="true">
      <path d="M0 63l12-14 2.500 3L140 .5 17 60l2 3z" fill="#fb3c38" />
    </svg>
    <div className="absolute right-[4px] bottom-0 text-[29px] leading-[32px] font-bold whitespace-nowrap text-[#cfcfcf]">3D溜溜网</div>
  </main>
);

export default function App() {
  return (
    <div className="flex min-h-screen flex-col overflow-hidden bg-white pt-[27px] font-['Noto_Sans','Noto_Sans_CJK_SC',sans-serif]">
      <Header />
      <div className="ml-px bg-[#d9d9d9]">
        <RibbonTabs />
        <Ribbon />
      </div>
      <FileTabs />
      <PropertyBar />
      <div className="flex flex-1">
        <DrawToolbar />
        <Canvas />
      </div>
    </div>
  );
}
